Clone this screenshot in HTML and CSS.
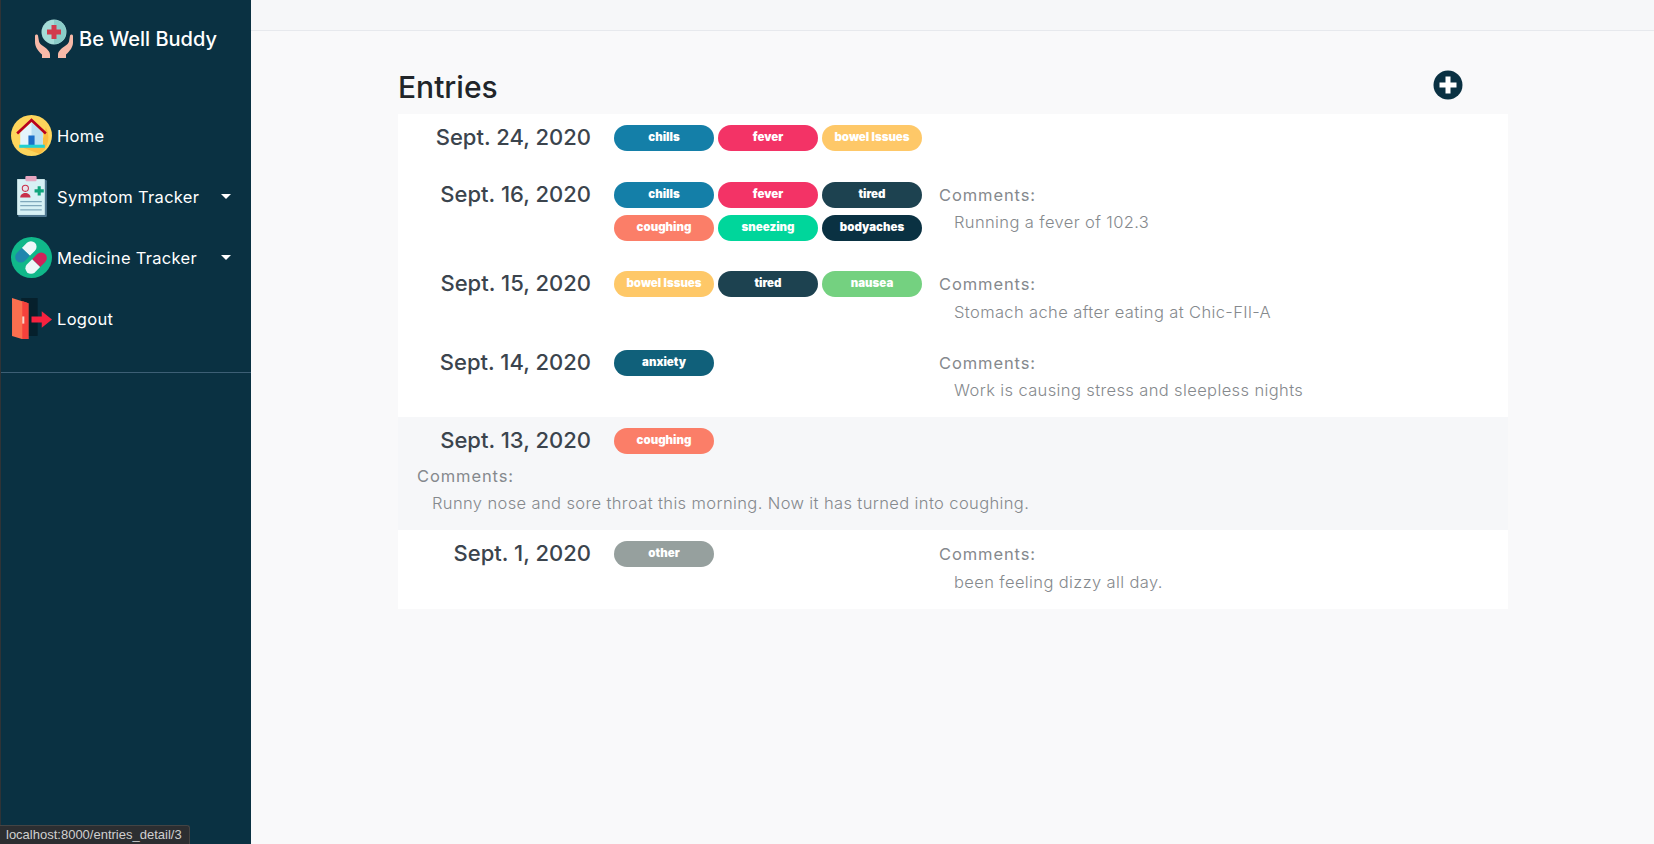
FILE: index.html
```html
<!DOCTYPE html>
<html lang="en">
<head>
    <meta charset="UTF-8">
    <meta name="viewport" content="width=device-width, initial-scale=1.0">
    <title>Be Well Buddy</title>
    <link rel="stylesheet" href="styles.css">
</head>
<body>
    <div class="wrapper">
        <nav class="sidebar">
            <div class="brand">
                <svg class="brandIcon" viewBox="0 0 40 40">
                    <circle cx="20" cy="13" r="12.5" fill="#a5dcd8"/>
                    <path d="M20 1a12 12 0 0 1 0 24z" fill="#8accc8"/>
                    <path d="M17.5 6h5v4.500H27v5h-4.500V20h-5v-4.500H13v-5h4.500z" fill="#d23a4c"/>
                    <path d="M1 17c0-2 2.500-2 3-.5l1 6c.5 2 2 3 4 4.500 4 3 7 5 7 9V39H8v-3.500C4 32 1 28 1 23z" fill="#f8b9a8"/>
                    <path d="M39 17c0-2-2.500-2-3-.5l-1 6c-.5 2-2 3-4 4.500-4 3-7 5-7 9V39h8v-3.500c4-3.500 7-7.500 7-12z" fill="#f8b9a8"/>
                </svg>
                <span>Be Well Buddy</span>
            </div>
            <ul class="navList">
                <li class="navItem">
                    <svg class="navIcon" viewBox="0 0 40 40">
                        <circle cx="20" cy="20" r="20" fill="#fdd55c"/>
                        <path d="M34 12a20 20 0 0 1-6 26L12 32l20-10z" fill="#fbbd3f"/>
                        <path d="M9 17 20 7l11 10v14H9z" fill="#e4f4fb"/>
                        <path d="M20 7l11 10v14H20z" fill="#b9dff2"/>
                        <path d="M6 18 20 5l14 13" fill="none" stroke="#b8001f" stroke-width="2.600"/>
                        <rect x="17" y="20" width="6" height="11" fill="#1b6fc9"/>
                        <rect x="8" y="29" width="25" height="3" fill="#22d0cf"/>
                    </svg>
                    <span>Home</span>
                </li>
                <li class="navItem">
                    <svg class="navIcon" viewBox="0 0 40 40">
                        <rect x="7" y="4" width="28" height="36" rx="1" fill="#4f7790"/>
                        <rect x="6" y="3" width="27" height="35" fill="#d7f1f5"/>
                        <rect x="14" y="0" width="11" height="5" rx="1" fill="#e6a6c0"/>
                        <circle cx="14" cy="12" r="3" fill="#e9e2ea" stroke="#c8304a"/>
                        <path d="M9 21c0-6 10-6 10 0z" fill="#c8304a"/>
                        <path d="M23 13h3v-3h3v3h3v3h-3v3h-3v-3h-3z" fill="#10a57c"/>
                        <path d="M9 25h21M9 29h21M9 33h21" stroke="#7fa8bb" stroke-width="1.200"/>
                    </svg>
                    <span>Symptom Tracker</span>
                    <i class="caret"></i>
                </li>
                <li class="navItem">
                    <svg class="navIcon" viewBox="0 0 40 40">
                        <circle cx="20" cy="20" r="20" fill="#10b88a"/>
                        <g transform="translate(14.500 14.500) rotate(-45)">
                            <path d="M0-5.500H7a5.500 5.500 0 0 1 0 11H0z" fill="#eef7fa"/>
                            <path d="M0-5.500H-7a5.500 5.500 0 0 0 0 11H0z" fill="#1f86ad"/>
                        </g>
                        <g transform="translate(24.500 25.500) rotate(-45)">
                            <path d="M0-5.500H7a5.500 5.500 0 0 1 0 11H0z" fill="#d0235a"/>
                            <path d="M0-5.500H-7a5.500 5.500 0 0 0 0 11H0z" fill="#eef7fa"/>
                        </g>
                    </svg>
                    <span>Medicine Tracker</span>
                    <i class="caret"></i>
                </li>
                <li class="navItem">
                    <svg class="navIcon" viewBox="0 0 40 40">
                        <rect x="10" y="0" width="16" height="37" fill="#06202c"/>
                        <path d="M1 0l16 5v37L1 37z" fill="#fb6f4f"/>
                        <path d="M11 3l6 2v37l-6-2z" fill="#f5413c"/>
                        <rect x="11" y="18" width="2" height="7" fill="#f6d5c9"/>
                        <path d="M20 18h10v-5l10 8-10 8v-5H20z" fill="#f9223f"/>
                    </svg>
                    <span>Logout</span>
                </li>
            </ul>
            <hr class="navRule">
        </nav>

        <div class="mainPanel">
            <div class="topBar"></div>
            <main class="content">
                <div class="pageHead">
                    <h1>Entries</h1>
                    <svg class="addIcon" viewBox="0 0 30 30">
                        <circle cx="15" cy="15" r="14.500" fill="#0a3142"/>
                        <path d="M12.500 6.500h5v6h6v5h-6v6h-5v-6h-6v-5h6z" fill="#fff"/>
                    </svg>
                </div>

                <div class="entries">
                    <div class="entry">
                        <div class="entryDate">Sept. 24, 2020</div>
                        <div class="chips">
                            <span class="chip chills">chills</span>
                            <span class="chip fever">fever</span>
                            <span class="chip bowel">bowel Issues</span>
                        </div>
                    </div>
                    <div class="entry">
                        <div class="entryDate">Sept. 16, 2020</div>
                        <div class="chips">
                            <span class="chip chills">chills</span>
                            <span class="chip fever">fever</span>
                            <span class="chip tired">tired</span>
                            <span class="chip coughing">coughing</span>
                            <span class="chip sneezing">sneezing</span>
                            <span class="chip bodyaches">bodyaches</span>
                        </div>
                        <div class="comments">
                            <div class="commentLabel">Comments:</div>
                            <div class="commentText">Running a fever of 102.3</div>
                        </div>
                    </div>
                    <div class="entry">
                        <div class="entryDate">Sept. 15, 2020</div>
                        <div class="chips">
                            <span class="chip bowel">bowel Issues</span>
                            <span class="chip tired">tired</span>
                            <span class="chip nausea">nausea</span>
                        </div>
                        <div class="comments">
                            <div class="commentLabel">Comments:</div>
                            <div class="commentText">Stomach ache after eating at Chic-FIl-A</div>
                        </div>
                    </div>
                    <div class="entry">
                        <div class="entryDate">Sept. 14, 2020</div>
                        <div class="chips">
                            <span class="chip anxiety">anxiety</span>
                        </div>
                        <div class="comments">
                            <div class="commentLabel">Comments:</div>
                            <div class="commentText">Work is causing stress and sleepless nights</div>
                        </div>
                    </div>
                    <div class="entry entryHover">
                        <div class="entryDate">Sept. 13, 2020</div>
                        <div class="chips">
                            <span class="chip coughing">coughing</span>
                        </div>
                        <div class="comments">
                            <div class="commentLabel">Comments:</div>
                            <div class="commentText">Runny nose and sore throat this morning. Now it has turned into coughing.</div>
                        </div>
                    </div>
                    <div class="entry">
                        <div class="entryDate">Sept. 1, 2020</div>
                        <div class="chips">
                            <span class="chip other">other</span>
                        </div>
                        <div class="comments">
                            <div class="commentLabel">Comments:</div>
                            <div class="commentText">been feeling dizzy all day.</div>
                        </div>
                    </div>
                </div>
            </main>
        </div>
    </div>
    <div class="statusBubble">localhost:8000/entries_detail/3</div>
</body>
</html>
```

FILE: styles.css
```css
* {
    box-sizing: border-box;
}
html, body {
    height: 100%;
}
body {
    margin: 0;
    background-color: #f9f9fa;
    font-family: "Inter", "Open Sans", sans-serif;
    overflow: hidden;
}
.wrapper {
    display: flex;
    height: 844px;
}

/* sidebar */
.sidebar {
    width: 251px;
    flex: none;
    background-color: #0a3142;
    border-left: 1px solid #2f3336;
    color: #fff;
}
.brand {
    display: flex;
    align-items: center;
    height: 40px;
    margin-top: 19px;
    padding-left: 33px;
    font-size: 20px;
    font-weight: 500;
}
.brandIcon {
    width: 40px;
    height: 40px;
    margin-right: 5px;
}
.navList {
    list-style: none;
    margin: 56px 0 0;
    padding: 0;
}
.navItem {
    display: flex;
    align-items: center;
    height: 41px;
    margin-bottom: 20px;
    padding-left: 10px;
    font-size: 16.500px;
    letter-spacing: 0.300px;
}
.navIcon {
    width: 41px;
    height: 41px;
    margin-right: 5px;
    flex: none;
}
.caret {
    margin-left: auto;
    margin-right: 20px;
    border-top: 5px solid #fff;
    border-left: 5px solid transparent;
    border-right: 5px solid transparent;
}
.navRule {
    margin: 33px 0 0;
    border: 0;
    border-top: 1px solid #3d5f75;
}

/* main area */
.mainPanel {
    flex: 1;
    min-width: 0;
}
.topBar {
    height: 31px;
    background-color: #f6f7f9;
    border-bottom: 1px solid #e7e9ed;
}
.content {
    width: 1110px;
    margin-left: 147px;
}
.pageHead {
    display: flex;
    justify-content: space-between;
    align-items: center;
    height: 83px;
    padding-right: 45px;
}
.pageHead h1 {
    margin: 29px 0 0;
    font-size: 30px;
    font-weight: 500;
    color: #212529;
}
.addIcon {
    width: 30px;
    height: 30px;
    margin-top: 25px;
}

/* entries */
.entries {
    background-color: #fff;
}
.entry {
    display: flex;
    flex-wrap: wrap;
    align-items: flex-start;
    padding: 11px 0 12.500px;
}
.entryHover {
    background-color: #f6f7f9;
}
.entryDate {
    width: 193px;
    height: 26px;
    margin-right: 23px;
    font-size: 22px;
    line-height: 25px;
    font-weight: 500;
    text-align: right;
    color: #3b444d;
}
.chips {
    display: grid;
    grid-template-columns: repeat(3, 100px);
    column-gap: 4px;
    width: 308px;
    margin-right: 17px;
}
.chip {
    height: 26px;
    margin-bottom: 7px;
    border-radius: 13px;
    font-size: 11.500px;
    line-height: 25px;
    font-weight: 900;
    text-align: center;
    color: #fff;
}
.chills { background-color: #147fa8; }
.fever { background-color: #f33366; }
.bowel { background-color: #fec868; }
.tired { background-color: #1d4250; }
.coughing { background-color: #fb7e68; }
.sneezing { background-color: #00d69b; }
.bodyaches { background-color: #0a3142; }
.nausea { background-color: #74d180; }
.anxiety { background-color: #10607a; }
.other { background-color: #96a09e; }

.comments {
    line-height: 27.500px;
    color: #85898d;
}
.commentLabel {
    font-size: 16.500px;
    letter-spacing: 0.900px;
    font-weight: 400;
}
.commentText {
    padding-left: 15px;
    font-size: 16.500px;
    letter-spacing: 0.380px;
    font-weight: 300;
}
.entryHover .comments {
    flex-basis: 100%;
    margin-top: 1.500px;
    padding-left: 19px;
}

/* browser status bubble */
.statusBubble {
    position: fixed;
    left: 0;
    bottom: 0;
    height: 19px;
    width: 190px;
    padding-left: 6px;
    background-color: #2c2e31;
    border: 1px solid #444;
    border-left: 0;
    border-bottom: 0;
    border-top-right-radius: 3px;
    color: #d0d0d0;
    font-family: "Liberation Sans", sans-serif;
    font-size: 13px;
    line-height: 18px;
}
```
